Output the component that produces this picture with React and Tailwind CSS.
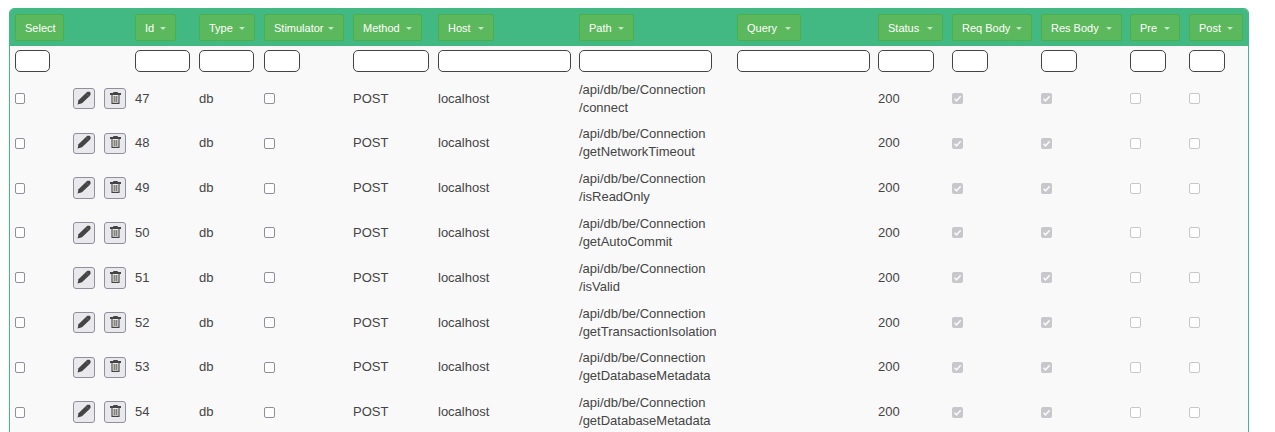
const GRID =
  'grid grid-cols-[58px_62px_64px_65px_89px_85px_141px_158px_141px_74px_89px_89px_59px_60px] pl-[5px]';

const columns = [
  { label: 'Select', button: 'w-[49px]', filter: 'w-[35px]', plain: true },
  null,
  { label: 'Id', button: 'w-[41px]', filter: 'w-[55px]' },
  { label: 'Type', button: 'w-[56px]', filter: 'w-[55px]' },
  { label: 'Stimulator', button: 'w-[80px]', filter: 'w-[36px]' },
  { label: 'Method', button: 'w-[69px]', filter: 'w-[76px]' },
  { label: 'Host', button: 'w-[56px]', filter: 'w-[133px]' },
  { label: 'Path', button: 'w-[55px]', filter: 'w-[133px]' },
  { label: 'Query', button: 'w-[64px]', filter: 'w-[133px]' },
  { label: 'Status', button: 'w-[65px]', filter: 'w-[56px]' },
  { label: 'Req Body', button: 'w-[80px]', filter: 'w-[36px]' },
  { label: 'Res Body', button: 'w-[81px]', filter: 'w-[36px]' },
  { label: 'Pre', button: 'w-[50px]', filter: 'w-[36px]' },
  { label: 'Post', button: 'w-[54px]', filter: 'w-[36px]' },
];

const rows = [
  [47, 'connect'],
  [48, 'getNetworkTimeout'],
  [49, 'isReadOnly'],
  [50, 'getAutoCommit'],
  [51, 'isValid'],
  [52, 'getTransactionIsolation'],
  [53, 'getDatabaseMetadata'],
  [54, 'getDatabaseMetadata'],
];

function Caret() {
  return (
    <svg className="h-[3px] w-[6px] shrink-0" viewBox="0 0 6 3">
      <path d="M0 0h6L3 3z" fill="#c3e6c3" />
    </svg>
  );
}

function HeaderButton({ column }) {
  return (
    <button
      className={`${column.button} flex h-[27px] items-center justify-between whitespace-nowrap rounded-[2px] border border-[#4cae4c] bg-[#5cb85c] px-[9px] pt-px text-[11px] leading-none text-white`}
    >
      <span className="pt-px">{column.label}</span>
      {!column.plain && <Caret />}
    </button>
  );
}

function Check({ checked, disabled, small }) {
  if (checked) {
    return (
      <span className="flex size-[11px] items-center justify-center rounded-[2px] bg-[#c7c7cc]">
        <svg className="size-[11px]" viewBox="0 0 11 11" fill="none">
          <path d="M2.5 5.8l2 2L8.7 3.2" stroke="#fafafa" strokeWidth="1.6" />
        </svg>
      </span>
    );
  }
  return (
    <span
      className={`block h-[11px] rounded-[2px] border bg-white ${small ? 'w-[10px]' : 'w-[11px]'} ${
        disabled ? 'border-[#c7c7cc]' : 'border-[#8f8f9d]'
      }`}
    />
  );
}

function IconButton({ label, children }) {
  return (
    <button
      aria-label={label}
      className="flex h-[21.5px] w-[22px] items-center justify-center rounded-[3px] border border-[#8f8f9d] bg-[#e9e9ed] text-[#444444]"
    >
      {children}
    </button>
  );
}

function PencilIcon() {
  return (
    <svg className="mb-[2px] size-[14px]" viewBox="0 0 14 14" fill="currentColor">
      <path d="M.6 13.5L1.5 9.2 9.2 1.7 10.4.8h2.2l.9.9v1.9l-.8 1.3-7.7 7.4z" />
      <path d="M8.9 2.3l2.9 3" stroke="#8b8b90" strokeWidth=".5" />
    </svg>
  );
}

function TrashIcon() {
  return (
    <svg className="mb-[2px] h-[12px] w-[11px]" viewBox="0 0 11 12" fill="none" stroke="currentColor">
      <path d="M3.5 1V.5h4V1" />
      <path d="M0 2h11" strokeWidth="2" />
      <path d="M2 3v8.4h7V3" strokeWidth="1.1" />
      <path d="M4.2 4v6M6.8 4v6" strokeWidth=".9" />
      <path d="M5.5 4v6" stroke="#a89a72" strokeWidth=".7" />
    </svg>
  );
}

export default function App() {
  return (
    <div
      className="h-[432px] w-full overflow-hidden bg-white pl-[9px] pt-2 text-[13px] leading-[18px] text-[#444444]"
      style={{ fontFamily: '"Liberation Sans", Arial, sans-serif' }}
    >
      <div className="h-[440px] w-[1240px] overflow-hidden rounded-t-[5px] border border-[#42b983] bg-[#f9f9f9]">
        <div className={`${GRID} h-[37px] bg-[#42b983] pt-[5px]`}>
          {columns.map((c, i) => (
            <div key={i}>{c && <HeaderButton column={c} />}</div>
          ))}
        </div>
        <div className={`${GRID} h-[30.2px] pt-1`}>
          {columns.map((c, i) => (
            <div key={i}>
              {c && (
                <input
                  aria-label={c.label}
                  className={`${c.filter} block h-[22px] rounded-[5px] border border-[#444444] bg-white`}
                />
              )}
            </div>
          ))}
        </div>
        {rows.map(([id, method]) => (
          <div key={id} className={`${GRID} h-[44.8px] items-center`}>
            <Check small />
            <div className="flex gap-[9px]">
              <IconButton label="Edit">
                <PencilIcon />
              </IconButton>
              <IconButton label="Delete">
                <TrashIcon />
              </IconButton>
            </div>
            <div>{id}</div>
            <div>db</div>
            <Check />
            <div>POST</div>
            <div>localhost</div>
            <div>
              <div>/api/db/be/Connection</div>
              <div>/{method}</div>
            </div>
            <div />
            <div>200</div>
            <Check checked />
            <Check checked />
            <Check disabled />
            <Check disabled />
          </div>
        ))}
      </div>
    </div>
  );
}
